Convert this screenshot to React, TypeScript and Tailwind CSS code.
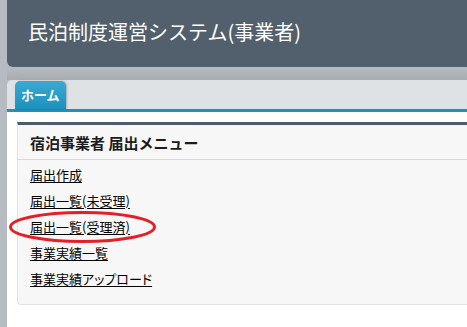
import React from "react";

const links = [
  { label: "届出作成" },
  { label: "届出一覧(未受理)" },
  { label: "届出一覧(受理済)" },
  { label: "事業実績一覧" },
  { label: "事業実績アップロード", narrow: true },
];

export default function App() {
  return (
    <div className="relative h-[327px] w-[467px] overflow-hidden bg-[#b5bbc1] pl-[7px] font-['Noto_Sans_CJK_JP','Noto_Sans',sans-serif]">
      {/* header */}
      <header className="h-[67px] rounded-bl-[6px] bg-[#525f6d] pl-[21px] pt-[18px] text-[20px] leading-[28px] text-white">
        民泊制度運営システム(事業者)
      </header>
      <div className="h-[13px] bg-gradient-to-b from-[#b6bcc2] to-[#a6acb2]" />

      {/* tabs */}
      <div className="flex h-[29px] items-end rounded-tl-[5px] bg-[#dfe2e5] pl-[8px]">
        <div className="h-[28px] rounded-t-[5px] bg-gradient-to-b from-[#3aa9d2] to-[#1a92bd] px-[6px] text-[13px] font-bold leading-[28px] text-white shadow-[1px_0_2px_rgba(0,0,0,0.25)]">
          ホーム
        </div>
      </div>
      <div className="h-[3px] bg-[#1a93bf]" />

      {/* content */}
      <main className="h-full bg-white pl-[10px] pt-[10px]">
        <section className="rounded-bl-[4px] border border-r-0 border-t-[3px] border-[#e2e2e2] border-t-[#4f5b69] bg-[#f7f7f7] pb-[12px]">
          <h1 className="h-[35px] border-b border-[#d9d9d9] px-[12px] text-[15px] font-bold leading-[35px] text-[#1c1c1c]">
            宿泊事業者 届出メニュー
          </h1>
          <ul className="px-[12px] pt-[2px]">
            {links.map((l) => (
              <li key={l.label} className="text-[13px] leading-[26px]">
                <a
                  href="#"
                  className={
                    l.narrow
                      ? "text-black underline underline-offset-2 [font-feature-settings:'palt']"
                      : "text-black underline underline-offset-2"
                  }
                >
                  {l.label}
                </a>
              </li>
            ))}
          </ul>
        </section>
      </main>

      {/* red annotation */}
      <svg className="pointer-events-none absolute left-0 top-0" width="467" height="327">
        <ellipse cx="82.5" cy="227" rx="72" ry="14.5" fill="none" stroke="#e51f26" strokeWidth="3" />
      </svg>
    </div>
  );
}
